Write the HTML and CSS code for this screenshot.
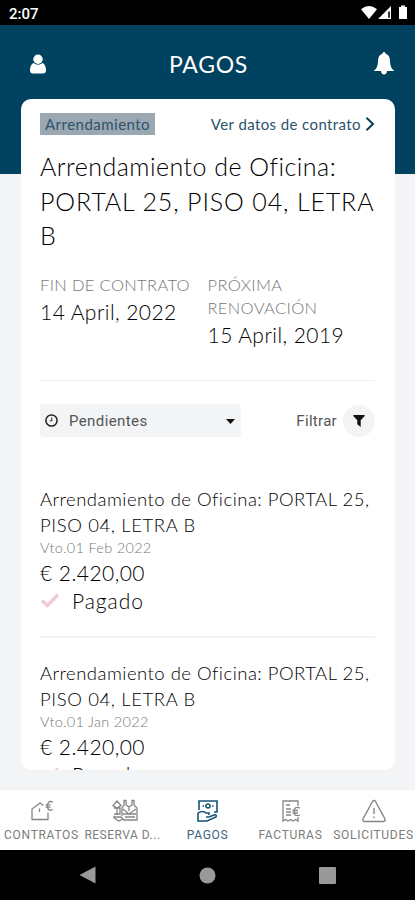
FILE: index.html
```html
<!DOCTYPE html>
<html lang="es">
<head>
<meta charset="utf-8">
<title>Pagos</title>
<meta name="viewport" content="width=device-width, initial-scale=1">
<link rel="stylesheet" href="styles.css">
</head>
<body>
<div class="phone">
  <div class="status">
    <span class="time">2:07</span>
    <svg class="signals" width="48" height="16" viewBox="0 0 48 16" fill="#fff">
      <path d="M0 4.2Q8 -2.2 16 4.2L8 14z"/>
      <path fill-rule="evenodd" d="M30 1V14H17zM28.8 6.500h-1.600v6.300h1.600z"/>
      <path d="M38 2h2V.5h4V2h2v12h-8z"/>
    </svg>
  </div>
  <main class="app">
    <header class="header">
      <svg width="18" height="20" viewBox="0 0 18 20" fill="#fff"><circle cx="9" cy="5.200" r="4.700"/><path d="M4.500 9Q9 12.500 13.500 9Q17 10.500 17 16.500Q17 19.500 14 19.500H4Q1 19.500 1 16.500Q1 10.500 4.500 9z"/></svg>
      <h1>PAGOS</h1>
      <svg width="20" height="23" viewBox="0 0 20 23" fill="#fff"><path d="M10 0Q11.500 0 11.700 1.700Q16 3 16 9Q16 16 20 18.500V19H13Q12.500 22.500 10 22.500Q7.500 22.500 7 19H0V18.500Q4 16 4 9Q4 3 8.300 1.700Q8.500 0 10 0z"/></svg>
    </header>
    <section class="card">
      <div class="top">
        <span class="tag">Arrendamiento</span>
        <a class="link"><span>Ver datos de contrato</span><svg width="10" height="14" viewBox="0 0 10 14" fill="none" stroke="#00425f" stroke-width="2"><path d="M1.500 .8L8 7L1.500 13.200"/></svg></a>
      </div>
      <h2 class="title"><span>Arrendamiento de Oficina:</span><br><span class="caps">PORTAL 25, PISO 04, LETRA</span><br><span>B</span></h2>
      <div class="dates">
        <div class="date"><div class="label">FIN DE CONTRATO</div><div class="value">14 April, 2022</div></div>
        <div class="date"><div class="label">PRÓXIMA<br>RENOVACIÓN</div><div class="value">15 April, 2019</div></div>
      </div>
      <div class="filters">
        <div class="select">
          <svg width="13" height="13" viewBox="0 0 13 13" fill="none" stroke="#222"><circle cx="6.500" cy="6.500" r="5.600" stroke-width="1.500"/><path d="M6.800 3.500V6.800H4.800" stroke-width="1"/></svg>
          <span class="option">Pendientes</span>
          <svg class="caret" width="9" height="5" viewBox="0 0 9 5" fill="#111"><path d="M0 0H9L4.500 5z"/></svg>
        </div>
        <div class="filter"><span class="filter-text">Filtrar</span><span class="funnel"><svg width="12" height="12" viewBox="0 0 12 12" fill="#111"><path d="M.5 0H11.500Q12 .8 11.500 1.200L7.700 5.200V12L4.300 9.300V5.200L.5 1.200Q0 .8 .5 0z"/></svg></span></div>
      </div>
      <article class="item">
        <p class="name"><span>Arrendamiento de Oficina: PORTAL 25,</span><br><span class="name-caps">PISO 04, LETRA B</span></p>
        <p class="due">Vto.01 Feb 2022</p>
        <p class="amount">€ 2.420,00</p>
        <p class="state"><svg width="20" height="15" viewBox="0 0 20 15" fill="none" stroke="#f0cdd0" stroke-width="3.600"><path d="M2 7.500L7.300 12.500L18 1.800"/></svg><span>Pagado</span></p>
      </article>
      <article class="item">
        <p class="name"><span>Arrendamiento de Oficina: PORTAL 25,</span><br><span class="name-caps">PISO 04, LETRA B</span></p>
        <p class="due">Vto.01 Jan 2022</p>
        <p class="amount">€ 2.420,00</p>
        <p class="state"><svg width="20" height="15" viewBox="0 0 20 15" fill="none" stroke="#f0cdd0" stroke-width="3.600"><path d="M2 7.500L7.300 12.500L18 1.800"/></svg><span>Pagado</span></p>
      </article>
    </section>
  </main>
  <nav class="tabs">
    <a class="tab"><svg width="26" height="24" viewBox="0 0 26 24"><path d="M14.500 6.500L11 4L3 10V20.500H19V13.500M10.500 9.500V13M24 3Q18.500 1 18.500 7Q18.500 13 24 10.500M16.500 5.800H21.500M16.500 8.200H21.500"/></svg><span>CONTRATOS</span></a>
    <a class="tab"><svg width="28" height="24" viewBox="0 0 28 24"><path d="M6 2L2 6.500L6 9L10 6.500zM6 9V16M3 9H9V15H3M2 18H10L13 21H26V9L23 6V1.500H21V6L18 8L15 6V1.500H13V6L11 9V17M12 10L18 15L25 10M12 15H25M14 18H24M18 8V12M3 19L8 22L12 20"/></svg><span class="tab-long">RESERVA D...</span></a>
    <a class="tab active"><svg width="26" height="24" viewBox="0 0 26 24"><path d="M4 11V2H22V13H19M7.500 7H9M17 7H18.500M3 14V22H12L21 18Q22 15 19 16L14 18H11M3 14Q8 11 11 14H14V16"/><circle cx="13" cy="7" r="2"/></svg><span>PAGOS</span></a>
    <a class="tab"><svg width="26" height="24" viewBox="0 0 26 24"><path d="M20 7V2H5V22L7.500 20.500L10 22L12.500 20.500L15 22L17.500 20.500L20 22V18M8 6H12M8 10H13M8 13H13M8 16H13M22 9Q16 7 16 12.500Q16 18 22 16M14.500 11.500H20M14.500 14H20"/></svg><span>FACTURAS</span></a>
    <a class="tab"><svg width="26" height="24" viewBox="0 0 26 24"><path d="M13 1.500Q14 1.500 14.500 2.500L24 20Q24.500 22.500 22.500 22.500H3.500Q1.500 22.500 2 20L11.500 2.500Q12 1.500 13 1.500zM13 9V15M13 17.500V19" stroke-width="1.400"/></svg><span>SOLICITUDES</span></a>
  </nav>
  <div class="system">
    <svg width="17" height="18" viewBox="0 0 17 18" fill="#999"><path d="M16.500 .5V17.500L.5 9z"/></svg>
    <svg width="17" height="17" viewBox="0 0 17 17" fill="#999"><circle cx="8.500" cy="8.500" r="8"/></svg>
    <svg width="17" height="17" viewBox="0 0 17 17" fill="#999"><rect width="17" height="17" rx="1"/></svg>
  </div>
</div>
</body>
</html>
```
FILE: styles.css
```css
* { box-sizing: border-box; }
body, h1, h2, p { margin: 0; font-weight: 400; }
body { font-family: Lato, "Open Sans", sans-serif; color: #333; }
svg { display: block; flex: none; }
span { white-space: nowrap; }
.phone { width: 415px; height: 900px; display: flex; flex-direction: column; overflow: hidden; }
.status { height: 25px; background: #000; display: flex; justify-content: space-between; align-items: flex-start; padding: 5px 6px 0 9px; color: #fff; }
.time { font: 500 15px/18px Roboto, sans-serif; }
.app { height: 765px; background: linear-gradient(#00425f 149px, #f2f4f6 149px); padding: 0 20px 0 21px; }
.header { height: 74px; display: flex; justify-content: space-between; align-items: center; padding: 3px 1px 0 8px; color: #fff; }
h1 { font-size: 23px; line-height: 30px; letter-spacing: .7px; margin-right: 4px; padding-top: 1px; }
.card { height: 671px; background: #fff; border-radius: 10px; overflow: hidden; padding: 14px 20px 0 19px; }
.top { display: flex; justify-content: space-between; align-items: center; height: 22px; color: #2b536c; font-size: 15px; letter-spacing: .4px; }
.tag { background: #9ba7b1; width: 115px; height: 22px; line-height: 23px; padding-left: 5px; letter-spacing: .48px; }
.link { display: flex; align-items: center; gap: 4px; }
.title { margin-top: 14px; font-size: 25px; line-height: 34.500px; font-weight: 300; color: #000; letter-spacing: .48px; }
.caps { letter-spacing: .85px; }
.dates { margin-top: 21px; height: 107px; display: flex; border-bottom: 1px solid #eceef0; }
.date { width: 168.500px; white-space: nowrap; }
.label { font-size: 16.500px; line-height: 23px; font-weight: 300; color: #777; letter-spacing: .35px; }
.value { font-size: 21px; line-height: 29px; font-weight: 300; color: #000; letter-spacing: .45px; }
.filters { margin-top: 23px; display: flex; justify-content: space-between; align-items: center; height: 34px; font: 15px Roboto, sans-serif; color: #555; }
.select { width: 201px; height: 33px; background: #f2f4f6; border-radius: 4px; display: flex; align-items: center; padding: 0 6px 0 5px; }
.option { margin-left: 11px; flex: 1; letter-spacing: .4px; }
.caret { margin-top: 2px; }
.filter { display: flex; align-items: center; gap: 6px; }
.filter-text { letter-spacing: .3px; }
.funnel { width: 32px; height: 32px; border-radius: 50%; background: #f2f4f6; display: flex; align-items: center; justify-content: center; }
.item { margin-top: 48px; height: 152px; border-bottom: 2px solid #f3f4f6; }
.item + .item { margin-top: 22px; }
.name { font-size: 18.500px; line-height: 26px; font-weight: 300; color: #000; letter-spacing: .48px; }
.name-caps { letter-spacing: .62px; }
.due { font-size: 14.500px; line-height: 20px; font-weight: 300; color: #777; letter-spacing: .3px; }
.amount { font-size: 21px; line-height: 29px; font-weight: 300; color: #000; letter-spacing: .45px; }
.state { display: flex; align-items: center; gap: 12px; font-size: 21px; line-height: 28px; font-weight: 300; color: #000; letter-spacing: .95px; }
.tabs { height: 60px; background: #fff; display: grid; grid-template-columns: repeat(5, 83px); color: #7c7c7c; font: 12px Roboto, sans-serif; }
.tab { display: flex; flex-direction: column; align-items: center; padding-top: 9px; min-width: 0; }
.tab svg { fill: none; stroke: #858585; stroke-width: 1.300; }
.tab span { line-height: 16px; margin-top: 4px; letter-spacing: .7px; }
.tab .tab-long { letter-spacing: .5px; margin-right: 4px; }
.tab.active { color: #3c5f7c; }
.tab.active svg { stroke: #145575; stroke-width: 1.600; }
.system { height: 50px; background: #000; display: flex; justify-content: space-between; align-items: center; padding: 0 79px; }
```
